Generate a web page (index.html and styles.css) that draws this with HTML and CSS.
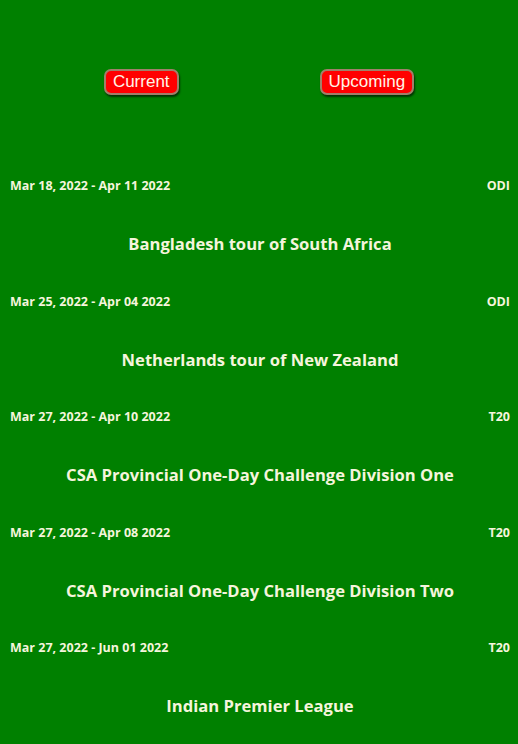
FILE: index.html
```html
<!DOCTYPE html>
<html>
<head>
<meta charset="utf-8">
<link rel="stylesheet" href="styles.css">
</head>
<body>
<div class="app">
  <div class="tabs">
    <button class="tab">Current</button>
    <button class="tab">Upcoming</button>
  </div>
  <ul class="list">
    <li class="item">
      <div class="meta"><span>Mar 18, 2022 - Apr 11 2022</span><span>ODI</span></div>
      <h3 class="title">Bangladesh tour of South Africa</h3>
    </li>
    <li class="item">
      <div class="meta"><span>Mar 25, 2022 - Apr 04 2022</span><span>ODI</span></div>
      <h3 class="title">Netherlands tour of New Zealand</h3>
    </li>
    <li class="item">
      <div class="meta"><span>Mar 27, 2022 - Apr 10 2022</span><span>T20</span></div>
      <h3 class="title">CSA Provincial One-Day Challenge Division One</h3>
    </li>
    <li class="item">
      <div class="meta"><span>Mar 27, 2022 - Apr 08 2022</span><span>T20</span></div>
      <h3 class="title">CSA Provincial One-Day Challenge Division Two</h3>
    </li>
    <li class="item">
      <div class="meta"><span>Mar 27, 2022 - Jun 01 2022</span><span>T20</span></div>
      <h3 class="title">Indian Premier League</h3>
    </li>
  </ul>
</div>
</body>
</html>
```
FILE: styles.css
```css
html, body {
  margin: 0;
  padding: 0;
  background: #008000;
}
body {
  font-family: "Open Sans", "Noto Sans", sans-serif;
  color: #f5f5dc;
}
.app {
  min-height: 744px;
}
.tabs {
  display: flex;
  justify-content: center;
  gap: 141px;
  padding-top: 69px;
}
.tab {
  height: 26px;
  padding: 0 7px;
  background: #ff0000;
  color: #fff5e8;
  font-family: "Liberation Sans", Arial, sans-serif;
  font-size: 17px;
  border: 2px solid #a0806a;
  border-radius: 7px;
  box-shadow: 1px 2px 2px rgba(0, 0, 0, 0.6);
  cursor: pointer;
}
.list {
  list-style: none;
  margin: 0;
  padding: 0 8px 0 10px;
  margin-top: 83px;
}
.item {
  height: 115.5px;
}
.meta {
  display: flex;
  justify-content: space-between;
  font-size: 12.5px;
  font-weight: 700;
  line-height: 16px;
}
.title {
  margin: 38px 0 0;
  text-align: center;
  font-size: 16.6px;
  font-weight: 700;
  line-height: 24px;
}
```
